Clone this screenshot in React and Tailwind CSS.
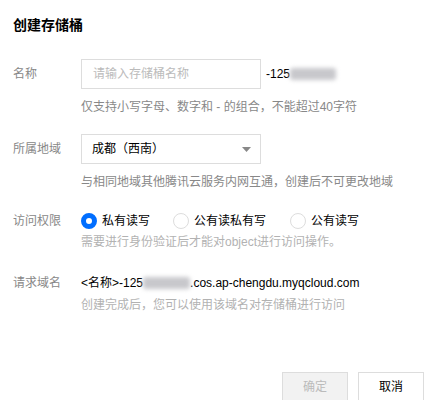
const font = { fontFamily: '"Liberation Sans", "Noto Sans CJK SC", sans-serif' };

function Blur({ w }) {
  return (
    <span
      className={`inline-block h-[12px] align-middle rounded-[3px] bg-[#c8c8cc] blur-[2px] ${w}`}
    />
  );
}

function Radio({ checked, label }) {
  return (
    <label className="flex items-center gap-[5px]">
      {checked ? (
        <span className="w-[16px] h-[16px] rounded-full border-[5px] border-[#006eff] bg-white" />
      ) : (
        <span className="w-[16px] h-[16px] rounded-full border border-[#ddd] bg-white" />
      )}
      <span className="text-[12px] text-black">{label}</span>
    </label>
  );
}

export default function App() {
  return (
    <div className="w-[437px] h-[400px] bg-white px-[13px] pt-[15px]" style={font}>
      <h1 className="text-[14px] leading-[20px] font-bold text-black">创建存储桶</h1>

      <div className="mt-[24px] flex">
        <div className="w-[68px] text-[12px] leading-[30px] text-[#888]">名称</div>
        <div>
          <div className="flex items-center">
            <div className="w-[180px] h-[30px] border border-[#ddd] px-[11px] text-[12px] leading-[28px] text-[#bbb]">
              请输入存储桶名称
            </div>
            <span className="ml-[5px] text-[12px] text-black">-125</span>
            <Blur w="w-[46px]" />
          </div>
          <p className="mt-[9px] text-[12px] leading-[18px] text-[#888]">
            仅支持小写字母、数字和 - 的组合，不能超过40字符
          </p>
        </div>
      </div>

      <div className="mt-[18px] flex">
        <div className="w-[68px] text-[12px] leading-[30px] text-[#888]">所属地域</div>
        <div>
          <div className="w-[180px] h-[30px] border border-[#ddd] pl-[10px] pr-[9px] flex items-center justify-between text-[12px] text-black">
            <span>成都（西南）</span>
            <svg width="9" height="5" viewBox="0 0 9 5">
              <path d="M0 0h9L4.5 5z" fill="#888" />
            </svg>
          </div>
          <p className="mt-[9px] text-[12px] leading-[18px] text-[#888]">
            与相同地域其他腾讯云服务内网互通，创建后不可更改地域
          </p>
        </div>
      </div>

      <div className="mt-[21px] flex">
        <div className="w-[68px] text-[12px] leading-[18px] text-[#888]">访问权限</div>
        <div>
          <div className="flex items-center h-[18px]">
            <div className="w-[92px]">
              <Radio checked label="私有读写" />
            </div>
            <div className="w-[117px]">
              <Radio label="公有读私有写" />
            </div>
            <Radio label="公有读写" />
          </div>
          <p className="mt-[3px] text-[12px] leading-[18px] text-[#b2b2b2]">
            需要进行身份验证后才能对object进行访问操作。
          </p>
        </div>
      </div>

      <div className="mt-[23px] flex">
        <div className="w-[68px] text-[12px] leading-[18px] text-[#888]">请求域名</div>
        <div>
          <div className="flex items-center h-[18px] text-[12px] text-black">
            <span>&lt;名称&gt;-125</span>
            <Blur w="w-[47px]" />
            <span>.cos.ap-chengdu.myqcloud.com</span>
          </div>
          <p className="mt-[4px] text-[12px] leading-[18px] text-[#b2b2b2]">
            创建完成后，您可以使用该域名对存储桶进行访问
          </p>
        </div>
      </div>

      <div className="mt-[58px] flex justify-end gap-[10px]">
        <button className="w-[66px] h-[30px] border border-[#ddd] bg-[#f2f2f2] text-[12px] text-[#bbb]">
          确定
        </button>
        <button className="w-[66px] h-[30px] border border-[#ddd] bg-white text-[12px] text-black">
          取消
        </button>
      </div>
    </div>
  );
}
